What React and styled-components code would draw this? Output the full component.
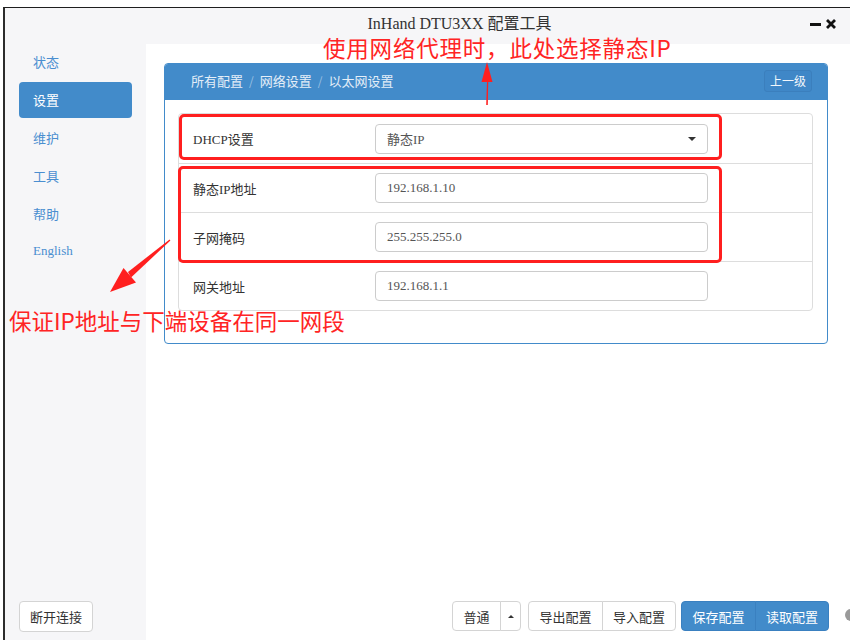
import React from "react";
import styled, { createGlobalStyle } from "styled-components";

const GlobalStyle = createGlobalStyle`
  html, body {
    margin: 0;
    padding: 0;
    background: #ffffff;
    font-family: "Liberation Serif", "Noto Sans CJK SC", serif;
  }
  * { box-sizing: border-box; }
`;

const Page = styled.div`
  position: relative;
  width: 850px;
  height: 640px;
  overflow: hidden;
  padding: 7px 0 0 3px;
`;

const Window = styled.div`
  height: 633px;
  border-top: 1px solid #1e1e1e;
  border-left: 2px solid #2c2c2c;
  display: flex;
  flex-direction: column;
  background: #f6f6f8;
`;

const TitleBar = styled.div`
  height: 36px;
  flex-shrink: 0;
  display: flex;
  align-items: center;
  padding-bottom: 4px;
`;

const Title = styled.div`
  flex: 1;
  text-align: center;
  padding-left: 112px;
  font-size: 16px;
  line-height: 18px;
  color: #333;
`;

const Controls = styled.div`
  display: flex;
  align-items: center;
  gap: 5px;
  margin-right: 14px;
  margin-left: 8px;
`;

const Body = styled.div`
  flex: 1;
  display: flex;
  min-height: 0;
`;

const Sidebar = styled.div`
  width: 141px;
  flex-shrink: 0;
  display: flex;
  flex-direction: column;
  justify-content: space-between;
  padding: 0 14px 8px 14px;
`;

const Nav = styled.div`
  display: flex;
  flex-direction: column;
  gap: 2px;
`;

const NavItem = styled.div`
  height: 36px;
  display: flex;
  align-items: center;
  padding-left: 14px;
  padding-bottom: 2px;
  border-radius: 4px;
  font-size: 13px;
  color: ${(p) => (p.$active ? "#ffffff" : "#4a8ed0")};
  background: ${(p) => (p.$active ? "#428bca" : "transparent")};
`;

const Button = styled.button`
  width: ${(p) => p.$w}px;
  height: 30px;
  padding: 0;
  white-space: nowrap;
  font-family: "Noto Sans CJK SC", "Liberation Sans", sans-serif;
  font-size: 13px;
  color: ${(p) => (p.$primary ? "#ffffff" : "#333")};
  background: ${(p) => (p.$primary ? "#428bca" : "#ffffff")};
  border: 1px solid ${(p) => (p.$primary ? "#3a80c0" : "#d4d4d4")};
  border-radius: 4px;
  display: flex;
  align-items: center;
  justify-content: center;
`;

const DisconnectButton = styled(Button)`
  height: 31px;
  align-self: flex-start;
`;

const Main = styled.div`
  flex: 1;
  background: #ffffff;
  display: flex;
  flex-direction: column;
  justify-content: space-between;
  padding: 19px 21px 9px 18px;
`;

const Panel = styled.div`
  width: 664px;
  border: 1px solid #428bca;
  border-radius: 4px;
  overflow: hidden;
`;

const PanelHeader = styled.div`
  height: 36px;
  background: #428bca;
  display: flex;
  align-items: center;
  justify-content: space-between;
  padding: 0 15px 3px 26px;
`;

const Crumbs = styled.div`
  display: flex;
  align-items: center;
  gap: 6px;
  font-family: "Noto Sans CJK SC", sans-serif;
  font-size: 13px;
  color: #e4eef8;
`;

const Sep = styled.span`
  color: #9cc0e2;
  font-size: 12px;
`;

const UpButton = styled.div`
  height: 22px;
  padding: 0 5px;
  display: flex;
  align-items: center;
  border: 1px solid #3b7fbd;
  background: #3f87c7;
  border-radius: 3px;
  font-family: "Noto Sans CJK SC", sans-serif;
  font-size: 12px;
  color: #f2f7fc;
`;

const PanelBody = styled.div`
  padding: 13px 14px 32px 13px;
`;

const ListWrap = styled.div`
  position: relative;
`;

const List = styled.div`
  border: 1px solid #dddddd;
  border-radius: 4px;
`;

const Row = styled.div`
  height: 49px;
  display: flex;
  align-items: center;
  padding-left: 14px;
  border-top: ${(p) => (p.$first ? "none" : "1px solid #dddddd")};
`;

const Label = styled.div`
  width: 182px;
  font-size: 13px;
  color: #333;
`;

const Input = styled.div`
  width: 333px;
  height: 30px;
  border: 1px solid #cccccc;
  border-radius: 4px;
  display: flex;
  align-items: center;
  justify-content: space-between;
  padding: 0 11px 0 11px;
  font-size: 13px;
  color: #555;
`;

const Caret = styled.span`
  width: 0;
  height: 0;
  border-left: 4px solid transparent;
  border-right: 4px solid transparent;
  border-top: 4px solid #333;
`;

const RedBox = styled.div`
  position: absolute;
  left: ${(p) => p.$x}px;
  top: ${(p) => p.$y}px;
  width: ${(p) => p.$w}px;
  height: ${(p) => p.$h}px;
  border: 3px solid #ff1f1f;
  border-radius: 5px;
`;

const Footer = styled.div`
  display: flex;
  justify-content: flex-end;
  gap: 6px;
`;

const Group = styled.div`
  display: flex;
  margin-left: ${(p) => p.$gap || 0}px;
  ${Button} { border-radius: 0; }
  ${Button}:first-child { border-radius: 4px 0 0 4px; }
  ${Button}:last-child { border-radius: 0 4px 4px 0; }
  ${Button} + ${Button} { margin-left: -1px; }
`;

const UpCaret = styled.span`
  width: 0;
  height: 0;
  border-left: 3px solid transparent;
  border-right: 3px solid transparent;
  border-bottom: 3px solid #333;
`;

const Note = styled.div`
  position: absolute;
  left: ${(p) => p.$x}px;
  top: ${(p) => p.$y}px;
  font-family: "Noto Sans CJK SC", sans-serif;
  font-size: 22.5px;
  letter-spacing: ${(p) => p.$ls || 0}px;
  line-height: 25px;
  color: #ff2424;
  white-space: nowrap;
  pointer-events: none;
`;

const Overlay = styled.svg`
  position: absolute;
  left: 0;
  top: 0;
  pointer-events: none;
`;

const Peek = styled.div`
  position: absolute;
  left: 845px;
  top: 609px;
  width: 12px;
  height: 12px;
  border-radius: 50%;
  background: #9a9a9a;
`;

const rows = [
  { label: "静态IP地址", value: "192.168.1.10" },
  { label: "子网掩码", value: "255.255.255.0" },
  { label: "网关地址", value: "192.168.1.1" },
];

export default function App() {
  return (
    <>
      <GlobalStyle />
      <Page>
        <Window>
          <TitleBar>
            <Title>InHand DTU3XX 配置工具</Title>
            <Controls>
              <svg width="11" height="10" viewBox="0 0 11 10">
                <rect x="0" y="4" width="11" height="3" fill="#111" />
              </svg>
              <svg width="10" height="10" viewBox="0 0 10 10">
                <path d="M1 1 L9 9 M9 1 L1 9" stroke="#111" strokeWidth="2.8" />
              </svg>
            </Controls>
          </TitleBar>
          <Body>
            <Sidebar>
              <Nav>
                <NavItem>状态</NavItem>
                <NavItem $active>设置</NavItem>
                <NavItem>维护</NavItem>
                <NavItem>工具</NavItem>
                <NavItem>帮助</NavItem>
                <NavItem>English</NavItem>
              </Nav>
              <DisconnectButton $w={74}>断开连接</DisconnectButton>
            </Sidebar>
            <Main>
              <Panel>
                <PanelHeader>
                  <Crumbs>
                    <span>所有配置</span>
                    <Sep>/</Sep>
                    <span>网络设置</span>
                    <Sep>/</Sep>
                    <span>以太网设置</span>
                  </Crumbs>
                  <UpButton>上一级</UpButton>
                </PanelHeader>
                <PanelBody>
                  <ListWrap>
                    <List>
                      <Row $first>
                        <Label>DHCP设置</Label>
                        <Input>
                          <span>静态IP</span>
                          <Caret />
                        </Input>
                      </Row>
                      {rows.map((r) => (
                        <Row key={r.label}>
                          <Label>{r.label}</Label>
                          <Input>{r.value}</Input>
                        </Row>
                      ))}
                    </List>
                    <RedBox $x={1} $y={1} $w={543} $h={46} />
                    <RedBox $x={0} $y={53} $w={544} $h={97} />
                  </ListWrap>
                </PanelBody>
              </Panel>
              <Footer>
                <Group>
                  <Button $w={49}>普通</Button>
                  <Button $w={21}>
                    <UpCaret />
                  </Button>
                </Group>
                <Group $gap={1}>
                  <Button $w={75}>导出配置</Button>
                  <Button $w={74}>导入配置</Button>
                </Group>
                <Group $gap={-1}>
                  <Button $w={75} $primary>保存配置</Button>
                  <Button $w={74} $primary>读取配置</Button>
                </Group>
              </Footer>
            </Main>
          </Body>
        </Window>

        <Note $x={323} $y={35} $ls={0.8}>使用网络代理时，此处选择静态IP</Note>
        <Note $x={9} $y={308}>保证IP地址与下端设备在同一网段</Note>

        <Overlay width="850" height="640" viewBox="0 0 850 640">
          <polygon points="486.2,105 487.8,105 488.2,82 487,82" fill="#ff1f1f" />
          <polygon points="487,62 481.5,82 492.5,82" fill="#ff1f1f" />
          <polygon points="170.4,240.6 169.6,239.4 128,272 131,277.5" fill="#ff1f1f" />
          <polygon points="110,292 123.5,268 136,282.5" fill="#ff1f1f" />
        </Overlay>
        <Peek />
      </Page>
    </>
  );
}
